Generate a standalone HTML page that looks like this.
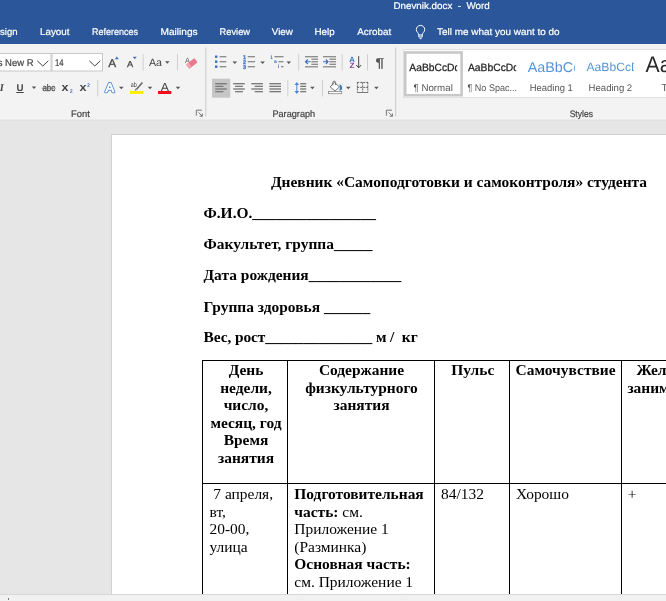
<!DOCTYPE html>
<html lang="ru">
<head>
<meta charset="utf-8">
<title>Dnevnik.docx - Word</title>
<style>
html,body{margin:0;padding:0;}
body{width:666px;height:601px;overflow:hidden;position:relative;background:#e6e6e6;font-family:"Liberation Sans",sans-serif;}
#wrap{position:absolute;left:0;top:0;width:666px;height:601px;will-change:transform;}
#chrome{position:absolute;left:0;top:0;display:block;}
#page{position:absolute;left:110.6px;top:134.4px;width:600px;height:480px;background:#fff;border:1px solid #d2d2d2;}
.doc{position:absolute;white-space:nowrap;font-family:"Liberation Serif",serif;font-size:15.44px;line-height:17.5px;color:#000;}
.b{font-weight:bold;}
.ln{position:absolute;background:#000;}
#bottom{position:absolute;left:0;top:594.2px;width:666px;height:7px;background:#f1f1f1;border-top:1px solid #d8d8d8;box-sizing:border-box;}
</style>
</head>
<body>
<div id="wrap">
<div id="page"></div>
<div class="doc b" style="left:271px;top:172.9px;">Дневник «Самоподготовки и самоконтроля» студента</div>
<div class="doc b" style="left:203.5px;top:204.1px;">Ф.И.О.________________</div>
<div class="doc b" style="left:203.5px;top:235.3px;">Факультет, группа_____</div>
<div class="doc b" style="left:203.5px;top:266.4px;">Дата рождения____________</div>
<div class="doc b" style="left:203.5px;top:297.6px;">Группа здоровья ______</div>
<div class="doc b" style="left:203.5px;top:328.4px;letter-spacing:-0.09px;">Вес, рост______________ м /&nbsp; кг</div>
<div class="ln" style="left:202.4px;top:360px;width:463.6px;height:1px"></div>
<div class="ln" style="left:202.4px;top:483.1px;width:463.6px;height:1px"></div>
<div class="ln" style="left:202.4px;top:360px;width:1px;height:236px"></div>
<div class="ln" style="left:287.3px;top:360px;width:1px;height:236px"></div>
<div class="ln" style="left:434px;top:360px;width:1px;height:236px"></div>
<div class="ln" style="left:509.3px;top:360px;width:1px;height:236px"></div>
<div class="ln" style="left:621.2px;top:360px;width:1px;height:236px"></div>
<div class="doc b" style="left:146px;width:200px;text-align:center;top:361.1px">День</div><div class="doc b" style="left:146px;width:200px;text-align:center;top:378.6px">недели,</div><div class="doc b" style="left:146px;width:200px;text-align:center;top:396.1px">число,</div><div class="doc b" style="left:146px;width:200px;text-align:center;top:413.6px">месяц, год</div><div class="doc b" style="left:146px;width:200px;text-align:center;top:431.1px">Время</div><div class="doc b" style="left:146px;width:200px;text-align:center;top:448.6px">занятия</div>
<div class="doc b" style="left:261.5px;width:200px;text-align:center;top:361.1px">Содержание</div><div class="doc b" style="left:261.5px;width:200px;text-align:center;top:378.6px">физкультурного</div><div class="doc b" style="left:261.5px;width:200px;text-align:center;top:396.1px">занятия</div>
<div class="doc b" style="left:372.8px;width:200px;text-align:center;top:361.1px">Пульс</div>
<div class="doc b" style="left:465.6px;width:200px;text-align:center;top:361.1px">Самочувствие</div>
<div class="doc b" style="left:567.6px;width:200px;text-align:center;top:361.1px">Желание</div><div class="doc b" style="left:567.6px;width:200px;text-align:center;top:378.6px">заниматься</div>
<div class="doc" style="left:209.5px;top:485.0px;">&nbsp;7 апреля,</div>
<div class="doc" style="left:209.5px;top:502.55px;">вт,</div>
<div class="doc" style="left:209.5px;top:520.1px;">20-00,</div>
<div class="doc" style="left:209.5px;top:537.65px;">улица</div>
<div class="doc" style="left:294.3px;top:485.0px;"><b>Подготовительная</b></div>
<div class="doc" style="left:294.3px;top:502.55px;"><b>часть:</b> см.</div>
<div class="doc" style="left:294.3px;top:520.1px;">Приложение 1</div>
<div class="doc" style="left:294.3px;top:537.65px;">(Разминка)</div>
<div class="doc" style="left:294.3px;top:555.2px;"><b>Основная часть:</b></div>
<div class="doc" style="left:294.3px;top:572.75px;">см. Приложение 1</div>
<div class="doc" style="left:294.3px;top:590.3px;">(Основная часть)</div>
<div class="doc" style="left:441px;top:485.0px;">84/132</div>
<div class="doc" style="left:516px;top:485.0px;">Хорошо</div>
<div class="doc" style="left:627.8px;top:485.0px;">+</div>
<svg id="chrome" width="666" height="122" viewBox="0 0 666 122" text-rendering="geometricPrecision" font-family="'Liberation Sans', sans-serif">
<rect x="0" y="0" width="666" height="44" fill="#2b579a"/>
<rect x="0" y="44" width="666" height="76" fill="#f3f3f3"/>
<rect x="0" y="119.6" width="666" height="1.1" fill="#dfdfdf"/>
<text x="393.5" y="9.1" font-size="9.7" fill="#ffffff" textLength="96.2" lengthAdjust="spacingAndGlyphs" stroke="#fff" stroke-width="0.2">Dnevnik.docx&#160; -&#160; Word</text>
<text x="-12.2" y="34.9" font-size="9.7" fill="#ffffff" textLength="29.7" lengthAdjust="spacingAndGlyphs" stroke="#fff" stroke-width="0.2">Design</text>
<text x="40" y="34.9" font-size="9.7" fill="#ffffff" textLength="29.5" lengthAdjust="spacingAndGlyphs" stroke="#fff" stroke-width="0.2">Layout</text>
<text x="92" y="34.9" font-size="9.7" fill="#ffffff" textLength="46" lengthAdjust="spacingAndGlyphs" stroke="#fff" stroke-width="0.2">References</text>
<text x="160.5" y="34.9" font-size="9.7" fill="#ffffff" textLength="37.2" lengthAdjust="spacingAndGlyphs" stroke="#fff" stroke-width="0.2">Mailings</text>
<text x="219.6" y="34.9" font-size="9.7" fill="#ffffff" textLength="30.4" lengthAdjust="spacingAndGlyphs" stroke="#fff" stroke-width="0.2">Review</text>
<text x="271.8" y="34.9" font-size="9.7" fill="#ffffff" textLength="21" lengthAdjust="spacingAndGlyphs" stroke="#fff" stroke-width="0.2">View</text>
<text x="314.4" y="34.9" font-size="9.7" fill="#ffffff" textLength="20.3" lengthAdjust="spacingAndGlyphs" stroke="#fff" stroke-width="0.2">Help</text>
<text x="357.2" y="34.9" font-size="9.7" fill="#ffffff" textLength="34" lengthAdjust="spacingAndGlyphs" stroke="#fff" stroke-width="0.2">Acrobat</text>
<text x="437" y="34.9" font-size="9.7" fill="#ffffff" textLength="122.6" lengthAdjust="spacingAndGlyphs" stroke="#fff" stroke-width="0.2">Tell me what you want to do</text>
<g fill="none" stroke="#fff" stroke-width="1"><path d="M418.8,35 C418.8,32.8 416.3,32.2 416.3,29.6 A4.2,4.2 0 1 1 424.7,29.6 C424.7,32.2 422.2,32.8 422.2,35 Z"/><path d="M418.8,35 V37 H422.2 V35"/><path d="M419.6,38.6 H421.6"/></g>
<rect x="-1" y="53.5" width="52" height="17.5" fill="#fff" stroke="#c8c8c8" stroke-width="1"/>
<rect x="52" y="53.5" width="50.5" height="17.5" fill="#fff" stroke="#c8c8c8" stroke-width="1"/>
<text x="-23" y="66.4" font-size="9.8" fill="#444444" textLength="56.5" lengthAdjust="spacingAndGlyphs" stroke="#444" stroke-width="0.2">Times New R</text>
<rect x="-30" y="54" width="30" height="16.5" fill="#fff"/>
<text x="55" y="66.4" font-size="9.8" fill="#444444" textLength="8.6" lengthAdjust="spacingAndGlyphs" stroke="#444" stroke-width="0.2">14</text>
<path d="M37.3,60.8 L42.8,66 L48.3,60.8" fill="none" stroke="#444444" stroke-width="1"/>
<path d="M89.3,60.8 L94.8,66 L100.3,60.8" fill="none" stroke="#444444" stroke-width="1"/>
<text x="108.3" y="66.9" font-size="11.3" fill="#444444" textLength="7.9" lengthAdjust="spacingAndGlyphs" stroke="#444444" stroke-width="0.25">A</text>
<path d="M114.8,59.2 L116.8,56.6 L118.8,59.2 Z" fill="#3a6fc4"/>
<text x="127.1" y="66.9" font-size="8.6" fill="#444444" textLength="6.2" lengthAdjust="spacingAndGlyphs" stroke="#444444" stroke-width="0.25">A</text>
<path d="M132.8,56.8 L136.8,56.8 L134.8,59.3 Z" fill="#3a6fc4"/>
<rect x="142.6" y="54" width="1" height="16.5" fill="#d0d0d0"/>
<text x="149" y="65.8" font-size="10.5" fill="#444444" textLength="13" lengthAdjust="spacingAndGlyphs">Aa</text>
<path d="M165.0,61.199999999999996 L169.60000000000002,61.199999999999996 L167.3,63.699999999999996 Z" fill="#555"/>
<rect x="177" y="54" width="1" height="16.5" fill="#d0d0d0"/>
<text x="185" y="62.8" font-size="7.8" fill="#666" textLength="5" lengthAdjust="spacingAndGlyphs">A</text>
<g transform="translate(191.5,63.5) rotate(-38)"><rect x="-5" y="-2.6" width="10.5" height="5.4" rx="1" fill="#e8798c"/><rect x="-5" y="-2.6" width="3.2" height="5.4" rx="1" fill="#f2a3b0"/></g>
<text x="-0.3" y="90.7" font-size="10.3" fill="#444444" font-family="'Liberation Serif', serif" font-style="italic" font-weight="bold">I</text>
<text x="16.5" y="90.7" font-size="9.8" fill="#444444" textLength="7" lengthAdjust="spacingAndGlyphs" font-weight="bold">U</text>
<rect x="16.3" y="92" width="7.4" height="1" fill="#444444"/>
<path d="M31.7,86.39999999999999 L36.3,86.39999999999999 L34,88.89999999999999 Z" fill="#555"/>
<text x="42.4" y="90.7" font-size="9.5" fill="#444444" textLength="12.8" lengthAdjust="spacingAndGlyphs" stroke="#444444" stroke-width="0.25">abc</text>
<rect x="41.8" y="87.8" width="14" height="0.7" fill="#6a6a6a"/>
<text x="61.5" y="90.7" font-size="11.5" fill="#444444" textLength="7" lengthAdjust="spacingAndGlyphs" font-weight="bold">x</text>
<text x="70" y="93.4" font-size="5.5" fill="#3a6fc4" textLength="2.6" lengthAdjust="spacingAndGlyphs" font-weight="bold">2</text>
<text x="79.5" y="90.7" font-size="11.5" fill="#444444" textLength="7" lengthAdjust="spacingAndGlyphs" font-weight="bold">x</text>
<text x="87.2" y="86.6" font-size="5.5" fill="#3a6fc4" textLength="2.6" lengthAdjust="spacingAndGlyphs" font-weight="bold">2</text>
<rect x="97.2" y="80" width="1" height="16.5" fill="#d0d0d0"/>
<text x="105.4" y="91.8" font-size="12.5" fill="#5b8fd6" textLength="8.6" lengthAdjust="spacingAndGlyphs" stroke="#5b8fd6" stroke-width="2.6" stroke-linejoin="round">A</text>
<text x="105.4" y="91.8" font-size="12.5" fill="#fff" textLength="8.6" lengthAdjust="spacingAndGlyphs" stroke="#fff" stroke-width="0.7" stroke-linejoin="round">A</text>
<path d="M119.0,86.8 L123.6,86.8 L121.3,89.3 Z" fill="#555"/>
<text x="130.8" y="86.9" font-size="7" fill="#444444" textLength="6" lengthAdjust="spacingAndGlyphs">ab</text>
<path d="M136.6,89.2 L142.4,82.4" stroke="#666" stroke-width="1.5" fill="none"/>
<path d="M134.6,90.8 L135.6,88.4 L137.2,89.8 Z" fill="#666"/>
<rect x="130" y="91" width="13.5" height="3" fill="#ffee00"/>
<path d="M147.7,86.8 L152.3,86.8 L150,89.3 Z" fill="#555"/>
<text x="160.8" y="90.6" font-size="11.5" fill="#444444" textLength="8.2" lengthAdjust="spacingAndGlyphs">A</text>
<rect x="158" y="91" width="13.3" height="3" fill="#f20d19"/>
<path d="M175.7,86.8 L180.3,86.8 L178,89.3 Z" fill="#555"/>
<g fill="none" stroke="#666" stroke-width="0.9"><path d="M196.3,115.7 V110.2 H201.8"/><path d="M198.5,112.4 L202.3,116.2 M202.3,113.5 V116.2 H199.60000000000002"/></g>
<text x="71" y="117.0" font-size="9.4" fill="#444444" textLength="18.8" lengthAdjust="spacingAndGlyphs" stroke="#444" stroke-width="0.2">Font</text>
<rect x="205.3" y="47.5" width="1" height="69" fill="#c9c9c9"/>
<rect x="215" y="55.5" width="2.4" height="2.4" fill="#3a6fc4"/>
<rect x="219.6" y="56.075" width="6.700000000000017" height="1.25" fill="#858585"/>
<rect x="215" y="60.5" width="2.4" height="2.4" fill="#3a6fc4"/>
<rect x="219.6" y="61.075" width="6.700000000000017" height="1.25" fill="#858585"/>
<rect x="215" y="65.5" width="2.4" height="2.4" fill="#3a6fc4"/>
<rect x="219.6" y="66.075" width="6.700000000000017" height="1.25" fill="#858585"/>
<path d="M232.5,61.4 L237.10000000000002,61.4 L234.8,63.9 Z" fill="#555"/>
<text x="243.1" y="58.7" font-size="5.6" fill="#3a6fc4" textLength="3.1" lengthAdjust="spacingAndGlyphs" font-weight="bold" stroke="#3a6fc4" stroke-width="0.25">1</text>
<rect x="247.7" y="56.075" width="7.300000000000011" height="1.25" fill="#858585"/>
<text x="243.1" y="63.7" font-size="5.6" fill="#3a6fc4" textLength="3.1" lengthAdjust="spacingAndGlyphs" font-weight="bold" stroke="#3a6fc4" stroke-width="0.25">2</text>
<rect x="247.7" y="61.075" width="7.300000000000011" height="1.25" fill="#858585"/>
<text x="243.1" y="68.7" font-size="5.6" fill="#3a6fc4" textLength="3.1" lengthAdjust="spacingAndGlyphs" font-weight="bold" stroke="#3a6fc4" stroke-width="0.25">3</text>
<rect x="247.7" y="66.075" width="7.300000000000011" height="1.25" fill="#858585"/>
<path d="M260.3,61.4 L264.90000000000003,61.4 L262.6,63.9 Z" fill="#555"/>
<text x="270.2" y="58.5" font-size="5.2" fill="#3a6fc4" textLength="2.6" lengthAdjust="spacingAndGlyphs" font-weight="bold">1</text>
<rect x="274.4" y="56.075" width="9.100000000000023" height="1.25" fill="#858585"/>
<text x="274" y="63.3" font-size="5.2" fill="#3a6fc4" textLength="2.8" lengthAdjust="spacingAndGlyphs" font-weight="bold">a</text>
<rect x="278.5" y="61.075" width="5.0" height="1.25" fill="#858585"/>
<text x="277.8" y="68.4" font-size="5.2" fill="#3a6fc4" textLength="1.4" lengthAdjust="spacingAndGlyphs" font-weight="bold">i</text>
<rect x="281" y="66.075" width="2.5" height="1.25" fill="#858585"/>
<path d="M286.5,61.4 L291.1,61.4 L288.8,63.9 Z" fill="#555"/>
<rect x="298.2" y="54" width="1" height="16.5" fill="#d0d0d0"/>
<rect x="305" y="56.075" width="13" height="1.25" fill="#858585"/><rect x="305" y="66.175" width="13" height="1.25" fill="#858585"/><rect x="311.4" y="58.575" width="6.600000000000023" height="1.25" fill="#858585"/><rect x="311.4" y="61.125" width="6.600000000000023" height="1.25" fill="#858585"/><rect x="311.4" y="63.675" width="6.600000000000023" height="1.25" fill="#858585"/><path d="M310.6,61.75 H305.6 M307.8,59.5 L305.5,61.75 L307.8,64" fill="none" stroke="#3a6fc4" stroke-width="1.1"/>
<rect x="323" y="56.075" width="13" height="1.25" fill="#858585"/><rect x="323" y="66.175" width="13" height="1.25" fill="#858585"/><rect x="329.4" y="58.575" width="6.600000000000023" height="1.25" fill="#858585"/><rect x="329.4" y="61.125" width="6.600000000000023" height="1.25" fill="#858585"/><rect x="329.4" y="63.675" width="6.600000000000023" height="1.25" fill="#858585"/><path d="M323,61.75 H328 M325.8,59.5 L328.1,61.75 L325.8,64" fill="none" stroke="#3a6fc4" stroke-width="1.1"/>
<rect x="341.7" y="54" width="1" height="16.5" fill="#d0d0d0"/>
<text x="349.2" y="61.6" font-size="7.8" fill="#3b78c4" textLength="5.6" lengthAdjust="spacingAndGlyphs" font-weight="bold">A</text>
<text x="349.5" y="68.2" font-size="7.8" fill="#8a3fa0" textLength="5" lengthAdjust="spacingAndGlyphs" font-weight="bold">Z</text>
<path d="M358.7,56.2 V67.6 M356.2,65 L358.7,67.8 L361.2,65" fill="none" stroke="#444444" stroke-width="1"/>
<rect x="367" y="54" width="1" height="16.5" fill="#d0d0d0"/>
<text x="375.6" y="66.6" font-size="12.8" fill="#555" textLength="8.6" lengthAdjust="spacingAndGlyphs" stroke="#555" stroke-width="0.3">¶</text>
<rect x="212" y="78.7" width="18.2" height="19" fill="#c6c6c6"/>
<rect x="215.2" y="83.025" width="11.599999999999994" height="1.35" fill="#7a7a7a"/><rect x="215.2" y="85.675" width="8.199999999999989" height="1.35" fill="#7a7a7a"/><rect x="215.2" y="88.325" width="11.599999999999994" height="1.35" fill="#7a7a7a"/><rect x="215.2" y="90.97500000000001" width="8.199999999999989" height="1.35" fill="#7a7a7a"/>
<rect x="233.2" y="83.025" width="11.599999999999994" height="1.35" fill="#7a7a7a"/><rect x="235.1" y="85.675" width="7.799999999999983" height="1.35" fill="#7a7a7a"/><rect x="233.2" y="88.325" width="11.599999999999994" height="1.35" fill="#7a7a7a"/><rect x="235.1" y="90.97500000000001" width="7.799999999999983" height="1.35" fill="#7a7a7a"/>
<rect x="251.3" y="83.025" width="11.600000000000023" height="1.35" fill="#7a7a7a"/><rect x="254.70000000000002" y="85.675" width="8.200000000000017" height="1.35" fill="#7a7a7a"/><rect x="251.3" y="88.325" width="11.600000000000023" height="1.35" fill="#7a7a7a"/><rect x="254.70000000000002" y="90.97500000000001" width="8.200000000000017" height="1.35" fill="#7a7a7a"/>
<rect x="269.4" y="83.025" width="11.600000000000023" height="1.35" fill="#7a7a7a"/><rect x="269.4" y="85.675" width="11.600000000000023" height="1.35" fill="#7a7a7a"/><rect x="269.4" y="88.325" width="11.600000000000023" height="1.35" fill="#7a7a7a"/><rect x="269.4" y="90.97500000000001" width="11.600000000000023" height="1.35" fill="#7a7a7a"/>
<rect x="287.3" y="80" width="1" height="16.5" fill="#d0d0d0"/>
<path d="M296.8,83 V93" fill="none" stroke="#4a86d4" stroke-width="1"/><path d="M294.5,85 L296.8,81.9 L299.1,85 Z M294.5,91 L296.8,94.1 L299.1,91 Z" fill="#4a86d4"/>
<rect x="300.2" y="83.025" width="6.0" height="1.35" fill="#7a7a7a"/>
<rect x="300.2" y="85.675" width="6.0" height="1.35" fill="#7a7a7a"/>
<rect x="300.2" y="88.325" width="6.0" height="1.35" fill="#7a7a7a"/>
<rect x="300.2" y="90.97500000000001" width="6.0" height="1.35" fill="#7a7a7a"/>
<path d="M310.09999999999997,86.8 L314.7,86.8 L312.4,89.3 Z" fill="#555"/>
<rect x="322" y="80" width="1" height="16.5" fill="#d0d0d0"/>
<g fill="none" stroke="#666" stroke-width="0.9"><path d="M334.2,82.4 L339.5,86.9 L335.1,90.9 L330.2,87 Z" fill="#fff"/><path d="M332.8,85.4 V82.6 Q332.8,81.2 334.2,81.2 Q335.6,81.2 335.6,82.6 V85"/></g>
<path d="M339.3,84.3 C341.6,85 342.7,87.4 341.9,89.2 C341.3,90.5 340,90.7 339.3,90.3 C340,89 340.2,87 339.3,84.3 Z" fill="#3b78c4"/>
<rect x="328.5" y="91.4" width="13.2" height="2.3" fill="#fff" stroke="#8a8a8a" stroke-width="0.8"/>
<path d="M346.0,86.8 L350.6,86.8 L348.3,89.3 Z" fill="#555"/>
<g stroke="#555" stroke-width="0.9" stroke-dasharray="2,1" fill="none"><path d="M357.2,82.4 H368 M357.2,87.4 H368 M357.4,82.4 V92 M362.6,82.4 V92 M367.8,82.4 V92"/></g>
<rect x="357" y="92" width="11.2" height="1" fill="#7a7a7a"/>
<path d="M374.09999999999997,86.8 L378.7,86.8 L376.4,89.3 Z" fill="#555"/>
<g fill="none" stroke="#666" stroke-width="0.9"><path d="M386.4,115.7 V110.2 H391.9"/><path d="M388.59999999999997,112.4 L392.4,116.2 M392.4,113.5 V116.2 H389.7"/></g>
<text x="272.4" y="117.0" font-size="9.4" fill="#444444" textLength="42.8" lengthAdjust="spacingAndGlyphs" stroke="#444" stroke-width="0.2">Paragraph</text>
<rect x="395.2" y="47.5" width="1" height="69" fill="#c9c9c9"/>
<rect x="403.5" y="49.5" width="270" height="48" fill="#fff" stroke="#e0e0e0" stroke-width="1"/>
<rect x="405.2" y="52.5" width="56.4" height="42.7" fill="#fff" stroke="#c8c8c8" stroke-width="2.6"/>
<clipPath id="c1"><rect x="405" y="52" width="52.2" height="44"/></clipPath>
<clipPath id="c2"><rect x="464" y="52" width="52.2" height="44"/></clipPath>
<clipPath id="c3"><rect x="524" y="52" width="50.8" height="44"/></clipPath>
<clipPath id="c4"><rect x="584" y="52" width="49.8" height="44"/></clipPath>
<text x="409.3" y="71.3" font-size="10.5" fill="#222" textLength="51" lengthAdjust="spacingAndGlyphs" clip-path="url(#c1)" stroke="#222" stroke-width="0.25">AaBbCcDd</text>
<text x="413.5" y="90.7" font-size="9.7" fill="#555" textLength="39.3" lengthAdjust="spacingAndGlyphs">¶ Normal</text>
<text x="468" y="71.3" font-size="10.5" fill="#222" textLength="51" lengthAdjust="spacingAndGlyphs" clip-path="url(#c2)" stroke="#222" stroke-width="0.25">AaBbCcDd</text>
<text x="467.5" y="90.7" font-size="9.7" fill="#555" textLength="49.5" lengthAdjust="spacingAndGlyphs">¶ No Spac...</text>
<text x="527.7" y="72.4" font-size="14.2" fill="#5596d6" textLength="63" lengthAdjust="spacingAndGlyphs" clip-path="url(#c3)">AaBbCcD</text>
<text x="529.8" y="90.7" font-size="9.7" fill="#555" textLength="43" lengthAdjust="spacingAndGlyphs">Heading 1</text>
<text x="586.5" y="71.3" font-size="12" fill="#5596d6" textLength="60" lengthAdjust="spacingAndGlyphs" clip-path="url(#c4)">AaBbCcDd</text>
<text x="588.6" y="90.7" font-size="9.7" fill="#555" textLength="43.6" lengthAdjust="spacingAndGlyphs">Heading 2</text>
<text x="645.5" y="72.4" font-size="22.5" fill="#2a2a2a" textLength="26" lengthAdjust="spacingAndGlyphs">Aa</text>
<text x="661.4" y="90.7" font-size="9.7" fill="#555" textLength="19" lengthAdjust="spacingAndGlyphs">Title</text>
<text x="569.7" y="116.8" font-size="9.4" fill="#444444" textLength="23.2" lengthAdjust="spacingAndGlyphs" stroke="#444" stroke-width="0.2">Styles</text>
</svg>
<div id="bottom"></div><div style="position:absolute;left:8px;top:598px;width:1px;height:2px;background:#777"></div>
</div>
</body>
</html>
